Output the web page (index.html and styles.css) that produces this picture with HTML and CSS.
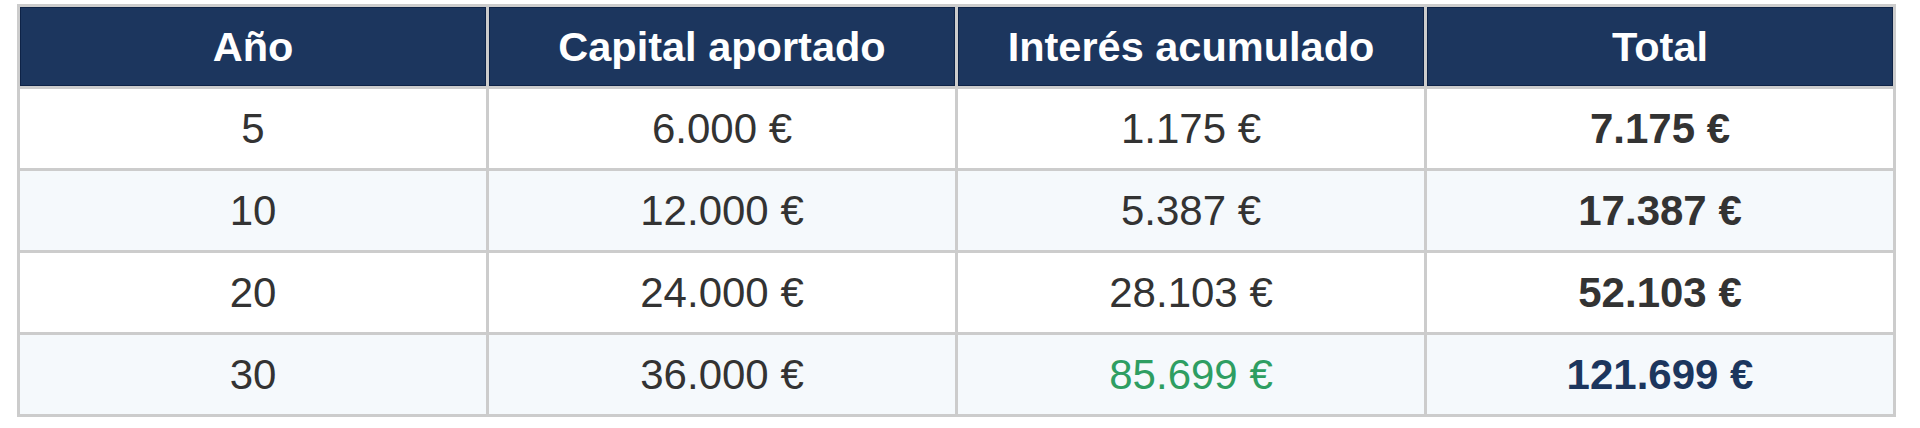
FILE: index.html
```html
<!DOCTYPE html>
<html lang="es">
<head>
<meta charset="utf-8">
<title>Tabla de interés compuesto</title>
<link rel="stylesheet" href="styles.css">
</head>
<body>
<div class="wrap">
<table class="growth">
  <thead>
    <tr><th>Año</th><th>Capital aportado</th><th>Interés acumulado</th><th>Total</th></tr>
  </thead>
  <tbody>
    <tr><td>5</td><td>6.000 €</td><td>1.175 €</td><td class="total">7.175 €</td></tr>
    <tr><td>10</td><td>12.000 €</td><td>5.387 €</td><td class="total">17.387 €</td></tr>
    <tr><td>20</td><td>24.000 €</td><td>28.103 €</td><td class="total">52.103 €</td></tr>
    <tr><td>30</td><td>36.000 €</td><td class="interest-final">85.699 €</td><td class="total total-final">121.699 €</td></tr>
  </tbody>
</table>
</div>
</body>
</html>
```
FILE: styles.css
```css
html, body {
  margin: 0;
  padding: 0;
  background: #ffffff;
}
.wrap {
  padding: 4px 24px 0 17px;
}
.growth {
  width: 1879px;
  table-layout: fixed;
  border-collapse: separate;
  border-spacing: 0;
  border-top: 3px solid #cccccc;
  border-left: 3px solid #cccccc;
  font-family: "Liberation Sans", Arial, sans-serif;
  font-size: 42px;
  color: #333333;
}
.growth th,
.growth td {
  border-right: 3px solid #cccccc;
  border-bottom: 3px solid #cccccc;
  padding: 17px 10px;
  line-height: 45px;
  text-align: center;
  white-space: nowrap;
}
.growth th {
  background: #1c365e;
  color: #ffffff;
  font-weight: bold;
  font-size: 41.5px;
  box-shadow: inset 0 0 0 1px #0e2347;
}
.growth tbody tr:nth-child(even) td {
  background: #f5f9fc;
}
.growth .total {
  font-weight: bold;
}
.growth .interest-final {
  color: #2e9e62;
}
.growth .total-final {
  color: #1c365e;
}
```
